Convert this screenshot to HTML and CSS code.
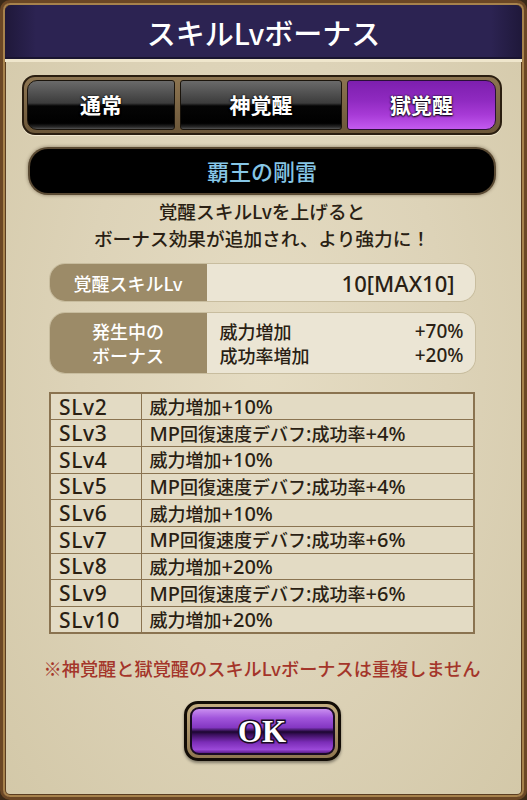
FILE: index.html
```html
<!DOCTYPE html>
<html lang="ja">
<head>
<meta charset="utf-8">
<title>スキルLvボーナス</title>
<link rel="stylesheet" href="styles.css">
</head>
<body>
<div class="frame">
  <header class="head"><h1 class="title">スキルLvボーナス</h1></header>
  <main class="content">
    <nav class="tabs">
      <div class="tab tab-first">通常</div>
      <div class="tab">神覚醒</div>
      <div class="tab tab-last tab-active">獄覚醒</div>
    </nav>
    <div class="skill">覇王の剛雷</div>
    <p class="desc">覚醒スキルLvを上げると<br>ボーナス効果が追加され、より強力に！</p>
    <div class="info info-lv">
      <div class="info-label">覚醒スキルLv</div>
      <div class="info-value"><span class="en">10[MAX10]</span></div>
    </div>
    <div class="info info-bonus">
      <div class="info-label">発生中の<br>ボーナス</div>
      <div class="bonus-list">
        <div class="bonus-row"><span>威力増加</span><span class="en num">+70%</span></div>
        <div class="bonus-row"><span>成功率増加</span><span class="en num">+20%</span></div>
      </div>
    </div>
    <table class="levels">
      <tr><td class="lv">SLv2</td><td>威力増加<span class="en">+10%</span></td></tr>
      <tr><td class="lv">SLv3</td><td><span class="en">MP</span>回復速度デバフ<span class="en">:</span>成功率<span class="en">+4%</span></td></tr>
      <tr><td class="lv">SLv4</td><td>威力増加<span class="en">+10%</span></td></tr>
      <tr><td class="lv">SLv5</td><td><span class="en">MP</span>回復速度デバフ<span class="en">:</span>成功率<span class="en">+4%</span></td></tr>
      <tr><td class="lv">SLv6</td><td>威力増加<span class="en">+10%</span></td></tr>
      <tr><td class="lv">SLv7</td><td><span class="en">MP</span>回復速度デバフ<span class="en">:</span>成功率<span class="en">+6%</span></td></tr>
      <tr><td class="lv">SLv8</td><td>威力増加<span class="en">+20%</span></td></tr>
      <tr><td class="lv">SLv9</td><td><span class="en">MP</span>回復速度デバフ<span class="en">:</span>成功率<span class="en">+6%</span></td></tr>
      <tr><td class="lv">SLv10</td><td>威力増加<span class="en">+20%</span></td></tr>
    </table>
    <p class="note">※神覚醒と獄覚醒のスキルLvボーナスは重複しません</p>
    <div class="ok-wrap"><button class="ok"><span class="ok-inner">OK</span></button></div>
  </main>
</div>
</body>
</html>
```

FILE: styles.css
```css
* { box-sizing: border-box; }
html, body { margin: 0; padding: 0; }
body {
  width: 527px;
  height: 800px;
  background: #3b2a18;
  font-family: "Noto Sans CJK JP", "Noto Sans", sans-serif;
  overflow: hidden;
}
.frame {
  width: 527px;
  height: 800px;
  border: 3px solid #6b4725;
  border-radius: 10px;
  box-shadow: inset 0 0 0 2px #a7824c, inset 0 0 0 3px #5a3d20;
  background:
    radial-gradient(ellipse at 50% 45%, #e5dcc3 0%, #ddd3b8 50%, #d3c8a8 100%);
  overflow: hidden;
  display: flex;
  flex-direction: column;
  padding: 2px;
}
.head {
  height: 54px;
  background: linear-gradient(90deg, #1f183a 0%, #2c2352 6%, #2c2352 94%, #1f183a 100%);
  border-bottom: 2px solid #1a1430;
  border-radius: 6px 6px 0 0;
  display: flex;
  align-items: center;
  justify-content: center;
  box-shadow: 0 3px 0 #efe6cc;
}
.title {
  margin: 0;
  color: #fff;
  font-size: 29px;
  font-weight: 500;
  line-height: 1;
  padding-top: 2px;
}
.content {
  flex: 1;
  display: flex;
  flex-direction: column;
  align-items: center;
  padding: 0 18px 0 15px;
}
.tabs {
  margin-top: 16px;
  width: 480px;
  height: 60px;
  display: grid;
  grid-template-columns: 148px 162px 149px;
  gap: 5px;
  padding: 3px 3px;
  background: linear-gradient(#8d7551, #6c5739);
  border: 2px solid #2a1e10;
  border-radius: 13px;
  box-shadow: 0 1px 0 #f3ead2;
}
.tab {
  display: flex;
  align-items: center;
  justify-content: center;
  color: #fff;
  font-size: 21px;
  font-weight: 700;
  text-shadow: 0 1px 2px #000, 0 0 2px #000;
  background: linear-gradient(#6a6a6a 0%, #3c3c3c 46%, #050505 52%, #000 88%, #2a2a2a 96%, #555 100%);
  border: 1px solid #1a140c;
  border-radius: 3px;
  padding-bottom: 2px;
}
.tab-first { border-radius: 10px 3px 3px 10px; }
.tab-last { border-radius: 3px 10px 10px 3px; }
.tab-active {
  background: linear-gradient(#7d1fae 0%, #8f2ac0 40%, #a73ad6 70%, #c35af0 100%);
  border-color: #2a0f38;
}
.skill {
  margin-top: 14px;
  width: 464px;
  height: 44px;
  background: #000;
  border-radius: 18px;
  box-shadow: 0 0 0 2px #5a4a33, 0 0 3px 3px rgba(70, 55, 35, 0.35);
  color: #86c6e6;
  font-size: 22px;
  font-weight: 500;
  display: flex;
  align-items: center;
  justify-content: center;
  padding-bottom: 2px;
}
.desc {
  margin: 4px 0 0;
  text-align: center;
  color: #2a1f14;
  font-size: 18.7px;
  font-weight: 500;
  line-height: 27px;
}
.info {
  width: 425px;
  display: flex;
  border-radius: 15px;
  overflow: hidden;
  box-shadow: 0 0 0 1px #c8bd9f;
}
.info-lv { margin-top: 13px; height: 37px; }
.info-bonus { margin-top: 12px; height: 60px; }
.info-label {
  width: 157px;
  flex: none;
  background: #9c8b68;
  color: #fff;
  font-size: 18px;
  font-weight: 500;
  display: flex;
  align-items: center;
  justify-content: center;
  text-align: center;
  line-height: 24px;
}
.info-value {
  flex: 1;
  background: #ebe5d4;
  color: #2a1f14;
  display: flex;
  align-items: center;
  justify-content: flex-end;
  padding-right: 20px;
  font-size: 22px;
  font-weight: 500;
}
.bonus-list {
  flex: 1;
  background: #ebe5d4;
  color: #2a1f14;
  display: flex;
  flex-direction: column;
  justify-content: center;
  padding: 0 11px 0 13px;
  font-size: 18px;
  font-weight: 500;
}
.bonus-row {
  height: 24px;
  display: flex;
  align-items: center;
  justify-content: space-between;
  line-height: 24px;
}
.num { font-size: 19px; line-height: 24px; }
.en { font-family: "Noto Sans", "Noto Sans CJK JP", sans-serif; }
.levels {
  margin-top: 19px;
  width: 426px;
  border-collapse: collapse;
  border: 2px solid #8a7350;
  background: #e3dbc4;
  color: #2a1f14;
  font-size: 18px;
  font-weight: 500;
}
.levels td {
  border: 1.5px solid #8a7350;
  height: 26.7px;
  padding: 0 0 0 8px;
  line-height: 24px;
  white-space: nowrap;
}
.levels td .en { font-size: 20px; }
.levels td.lv {
  width: 91px;
  font-family: "Noto Sans", "Noto Sans CJK JP", sans-serif;
  font-size: 21px;
  letter-spacing: 0.6px;
}
.note {
  margin: 21px 0 0;
  color: #a4352a;
  font-size: 18.2px;
  font-weight: 500;
  line-height: 26px;
  text-align: center;
}
.ok-wrap {
  margin-top: 20px;
}
.ok {
  width: 157px;
  height: 60px;
  padding: 3px;
  border: 3px solid #120c06;
  border-radius: 14px;
  background: linear-gradient(#c3ad80, #8f7650);
  display: block;
  box-shadow: 0 2px 3px rgba(0,0,0,0.4);
}
.ok-inner {
  display: flex;
  align-items: center;
  justify-content: center;
  width: 100%;
  height: 100%;
  border: 2px solid #1a0b24;
  border-radius: 9px;
  background: linear-gradient(#c98ef0 0%, #a256dc 20%, #8437c2 42%, #1c0630 52%, #3a0f5c 58%, #7a2cb6 75%, #9b48d8 92%, #5a1c88 100%);
  color: #fff;
  font-family: "Liberation Serif", "DejaVu Serif", serif;
  font-weight: 700;
  font-size: 31px;
  line-height: 1;
  -webkit-text-stroke: 3px #1a0a24;
  paint-order: stroke fill;
  padding-top: 1px;
}
```
